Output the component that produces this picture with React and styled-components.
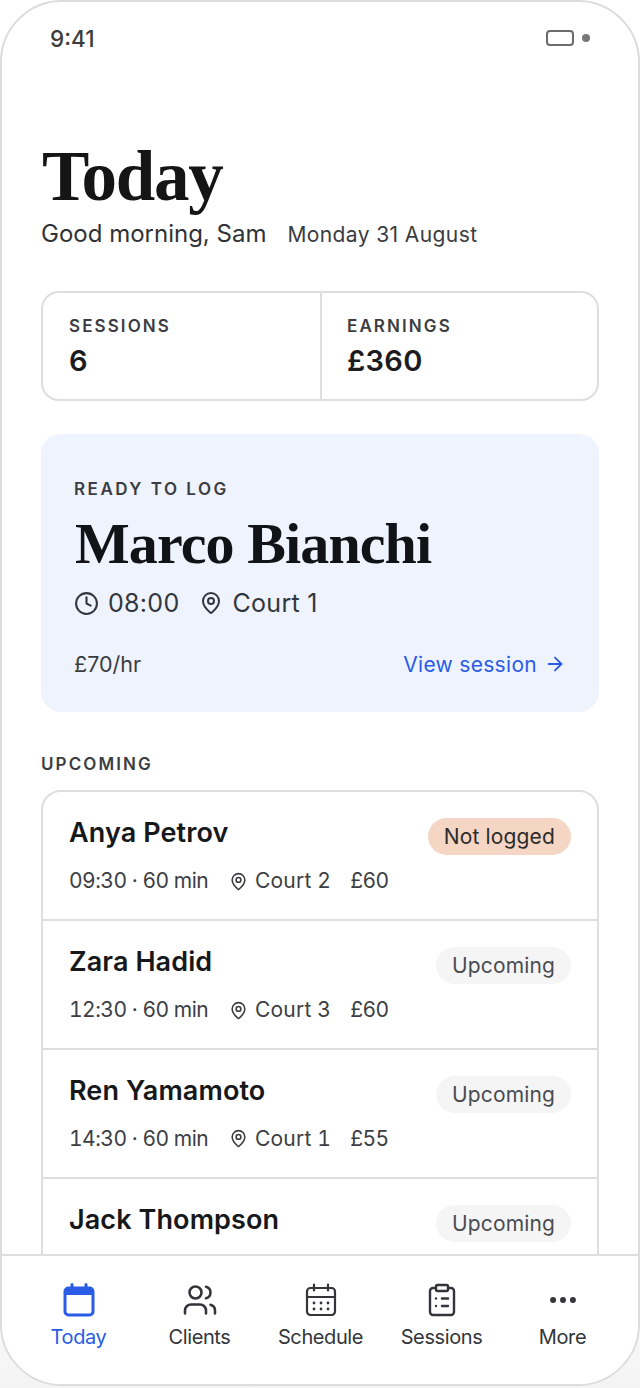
import React from 'react';
import styled, { createGlobalStyle } from 'styled-components';
import { Clock, MapPin, ArrowRight, Users, ClipboardList, MoreHorizontal } from 'lucide-react';

const GlobalStyle = createGlobalStyle`
  html, body {
    margin: 0;
    padding: 0;
    background: #fff;
  }
  * {
    box-sizing: border-box;
  }
`;

const Page = styled.div`
  width: 640px;
  height: 1388px;
  background: linear-gradient(180deg, #ffffff 0%, #ffffff 85%, #f4f4f4 100%);
  font-family: Inter, "Liberation Sans", sans-serif;
  color: #2d2f33;
`;

const Phone = styled.div`
  width: 640px;
  height: 1386px;
  display: flex;
  flex-direction: column;
  background: #fff;
  border: 2px solid #dcdcdc;
  border-radius: 62px;
  overflow: hidden;
`;

const StatusBar = styled.div`
  flex: none;
  height: 72px;
  padding: 0 48px 0 48px;
  display: flex;
  justify-content: space-between;
  align-items: center;
  font-size: 22.5px;
  font-weight: 500;
  color: #3c3c3c;
`;

const StatusIcons = styled.div`
  display: flex;
  align-items: center;
  gap: 8px;
`;

const BatteryBox = styled.div`
  width: 28px;
  height: 16px;
  border: 2px solid #6b6b6b;
  border-radius: 4px;
`;

const StatusDot = styled.div`
  width: 8px;
  height: 8px;
  border-radius: 50%;
  background: #777;
`;

const Content = styled.div`
  flex: 1;
  min-height: 0;
  overflow: hidden;
  padding: 62px 39px 0;
`;

const Title = styled.h1`
  margin: 0;
  padding-left: 1px;
  font-family: "Liberation Serif", serif;
  font-size: 71px;
  font-weight: 700;
  line-height: 80px;
  letter-spacing: -1.3px;
  color: #151515;
`;

const SubRow = styled.div`
  display: flex;
  align-items: baseline;
  gap: 21px;
`;

const Greeting = styled.span`
  font-size: 24px;
  line-height: 36px;
  color: #303236;
`;

const DateText = styled.span`
  font-size: 21px;
  letter-spacing: 0.4px;
  color: #3a3c40;
`;

const StatsCard = styled.div`
  margin-top: 39px;
  height: 110px;
  display: grid;
  grid-template-columns: 277px 1fr;
  border: 2px solid #dedede;
  border-radius: 18px;
`;

const Stat = styled.div`
  padding: 22px 25px 0 26px;
  & + & {
    border-left: 2px solid #dedede;
    padding-left: 25px;
  }
`;

const Eyebrow = styled.div`
  font-size: 17px;
  font-weight: 600;
  line-height: 22px;
  letter-spacing: 2.1px;
  color: #3b3d42;
`;

const StatValue = styled.div`
  margin-top: 6px;
  font-size: 29px;
  font-weight: 600;
  line-height: 36px;
  color: #1c1c1e;
  letter-spacing: 0.3px;
`;

const HeroCard = styled.div`
  margin-top: 33px;
  height: 278px;
  padding: 44px 33px 0;
  border-radius: 20px;
  background: #eef3fe;
`;

const HeroLabel = styled(Eyebrow)`
  letter-spacing: 2.5px;
`;

const HeroName = styled.div`
  margin-top: 10px;
  padding-left: 1px;
  font-family: "Liberation Serif", serif;
  font-size: 58px;
  font-weight: 700;
  line-height: 68px;
  letter-spacing: -0.9px;
  color: #121316;
`;

const HeroMeta = styled.div`
  margin-top: 7px;
  display: flex;
  align-items: center;
  font-size: 25px;
  line-height: 36px;
  letter-spacing: 0.3px;
  color: #33363c;
`;

const MetaPart = styled.span`
  display: flex;
  align-items: center;
  gap: 9px;
  margin-right: 20px;
`;

const HeroFoot = styled.div`
  margin-top: 30px;
  display: flex;
  justify-content: space-between;
  align-items: center;
`;

const Rate = styled.span`
  font-size: 21.5px;
  color: #3a3c40;
`;

const ViewLink = styled.a`
  display: flex;
  align-items: center;
  gap: 7px;
  font-size: 21px;
  letter-spacing: 0.3px;
  color: #2a5ce6;
`;

const SectionLabel = styled(Eyebrow)`
  margin-top: 41px;
  margin-bottom: 15px;
`;

const List = styled.div`
  border: 2px solid #dedede;
  border-radius: 20px;
`;

const Badge = styled.span`
  height: 37px;
  padding: 0 16px;
  display: flex;
  align-items: center;
  border-radius: 19px;
  font-size: 21px;
  letter-spacing: 0.15px;
  background: ${props => (props.$warn ? '#f5d5c4' : '#f5f5f6')};
  color: ${props => (props.$warn ? '#2b2b2b' : '#4a4c50')};
`;

const Row = styled.div`
  height: 128.6px;
  padding: 26px 26px 0 26px;
  display: flex;
  justify-content: space-between;
  align-items: flex-start;
  &:first-child {
    height: 127.4px;
  }
  & + & {
    border-top: 2px solid #dedede;
  }
`;

const RowName = styled.div`
  font-size: 27px;
  font-weight: 600;
  line-height: 30px;
  letter-spacing: 0.1px;
  color: #17181a;
`;

const RowMeta = styled.div`
  margin-top: 19px;
  display: flex;
  align-items: center;
  font-size: 21px;
  line-height: 28px;
  letter-spacing: 0.2px;
  font-variant-numeric: tabular-nums;
  color: #3c3e43;
`;

const RowTime = styled.span`
  width: 138px;
  letter-spacing: -0.5px;
  white-space: nowrap;
`;

const RowPlace = styled.span`
  display: flex;
  align-items: center;
  gap: 7px;
  margin-left: 22px;
  margin-right: 19px;
`;

const RowPrice = styled.span`
  letter-spacing: -0.5px;
`;

const Nav = styled.nav`
  flex: none;
  height: 130px;
  padding: 26px 16px 0;
  display: grid;
  grid-template-columns: repeat(5, 121px);
  border-top: 2px solid #dedede;
  background: #fff;
`;

const NavItem = styled.div`
  display: flex;
  flex-direction: column;
  align-items: center;
  gap: 6px;
  font-size: 20px;
  line-height: 26px;
  letter-spacing: -0.4px;
  color: ${props => (props.$active ? '#2a5ce6' : '#33353a')};
`;

const NavIcon = styled.div`
  height: 36px;
  display: flex;
  align-items: center;
  justify-content: center;
`;

const TodayIcon = () => (
  <svg width="34" height="36" viewBox="0 0 34 36" fill="none" stroke="#2a5ce6" strokeWidth="3" strokeLinecap="round">
    <rect x="3" y="6" width="28" height="27" rx="3.5" />
    <path d="M4 6h26v7H4z" fill="#2a5ce6" stroke="none" />
    <path d="M10 2.5v6M24 2.5v6" />
  </svg>
);

const ScheduleIcon = () => (
  <svg width="34" height="36" viewBox="0 0 34 36" fill="none" stroke="#33353a" strokeWidth="2.2" strokeLinecap="round">
    <rect x="3" y="6" width="28" height="27" rx="3.5" />
    <path d="M3 15h28M10 2.5v6M24 2.5v6" />
    <path d="M10 21h.01M17 21h.01M24 21h.01M10 27h.01M17 27h.01M24 27h.01" strokeWidth="2.8" />
  </svg>
);

const sessions = [
  { name: 'Anya Petrov', time: '09:30 · 60 min', court: 'Court 2', price: '£60', status: 'Not logged', warn: true },
  { name: 'Zara Hadid', time: '12:30 · 60 min', court: 'Court 3', price: '£60', status: 'Upcoming' },
  { name: 'Ren Yamamoto', time: '14:30 · 60 min', court: 'Court 1', price: '£55', status: 'Upcoming' },
  { name: 'Jack Thompson', status: 'Upcoming' },
];

const tabs = [
  { label: 'Today', icon: <TodayIcon />, active: true },
  { label: 'Clients', icon: <Users size={36} strokeWidth={1.7} /> },
  { label: 'Schedule', icon: <ScheduleIcon /> },
  { label: 'Sessions', icon: <ClipboardList size={36} strokeWidth={1.6} /> },
  { label: 'More', icon: <MoreHorizontal size={34} strokeWidth={2.2} /> },
];

const App = () => {
  return (
    <Page>
      <GlobalStyle />
      <Phone>
        <StatusBar>
          <span>9:41</span>
          <StatusIcons>
            <BatteryBox />
            <StatusDot />
          </StatusIcons>
        </StatusBar>
        <Content>
          <Title>Today</Title>
          <SubRow>
            <Greeting>Good morning, Sam</Greeting>
            <DateText>Monday 31 August</DateText>
          </SubRow>
          <StatsCard>
            <Stat>
              <Eyebrow>SESSIONS</Eyebrow>
              <StatValue>6</StatValue>
            </Stat>
            <Stat>
              <Eyebrow>EARNINGS</Eyebrow>
              <StatValue>£360</StatValue>
            </Stat>
          </StatsCard>
          <HeroCard>
            <HeroLabel>READY TO LOG</HeroLabel>
            <HeroName>Marco Bianchi</HeroName>
            <HeroMeta>
              <MetaPart><Clock size={25} strokeWidth={2} />08:00</MetaPart>
              <MetaPart><MapPin size={24} strokeWidth={2} />Court 1</MetaPart>
            </HeroMeta>
            <HeroFoot>
              <Rate>£70/hr</Rate>
              <ViewLink>View session <ArrowRight size={22} strokeWidth={2} /></ViewLink>
            </HeroFoot>
          </HeroCard>
          <SectionLabel>UPCOMING</SectionLabel>
          <List>
            {sessions.map(s => (
              <Row key={s.name}>
                <div>
                  <RowName>{s.name}</RowName>
                  {s.time && (
                    <RowMeta>
                      <RowTime>{s.time}</RowTime>
                      <RowPlace><MapPin size={19} strokeWidth={2} />{s.court}</RowPlace>
                      <RowPrice>{s.price}</RowPrice>
                    </RowMeta>
                  )}
                </div>
                <Badge $warn={s.warn}>{s.status}</Badge>
              </Row>
            ))}
          </List>
        </Content>
        <Nav>
          {tabs.map(t => (
            <NavItem key={t.label} $active={t.active}>
              <NavIcon>{t.icon}</NavIcon>
              {t.label}
            </NavItem>
          ))}
        </Nav>
      </Phone>
    </Page>
  );
};

export default App;
